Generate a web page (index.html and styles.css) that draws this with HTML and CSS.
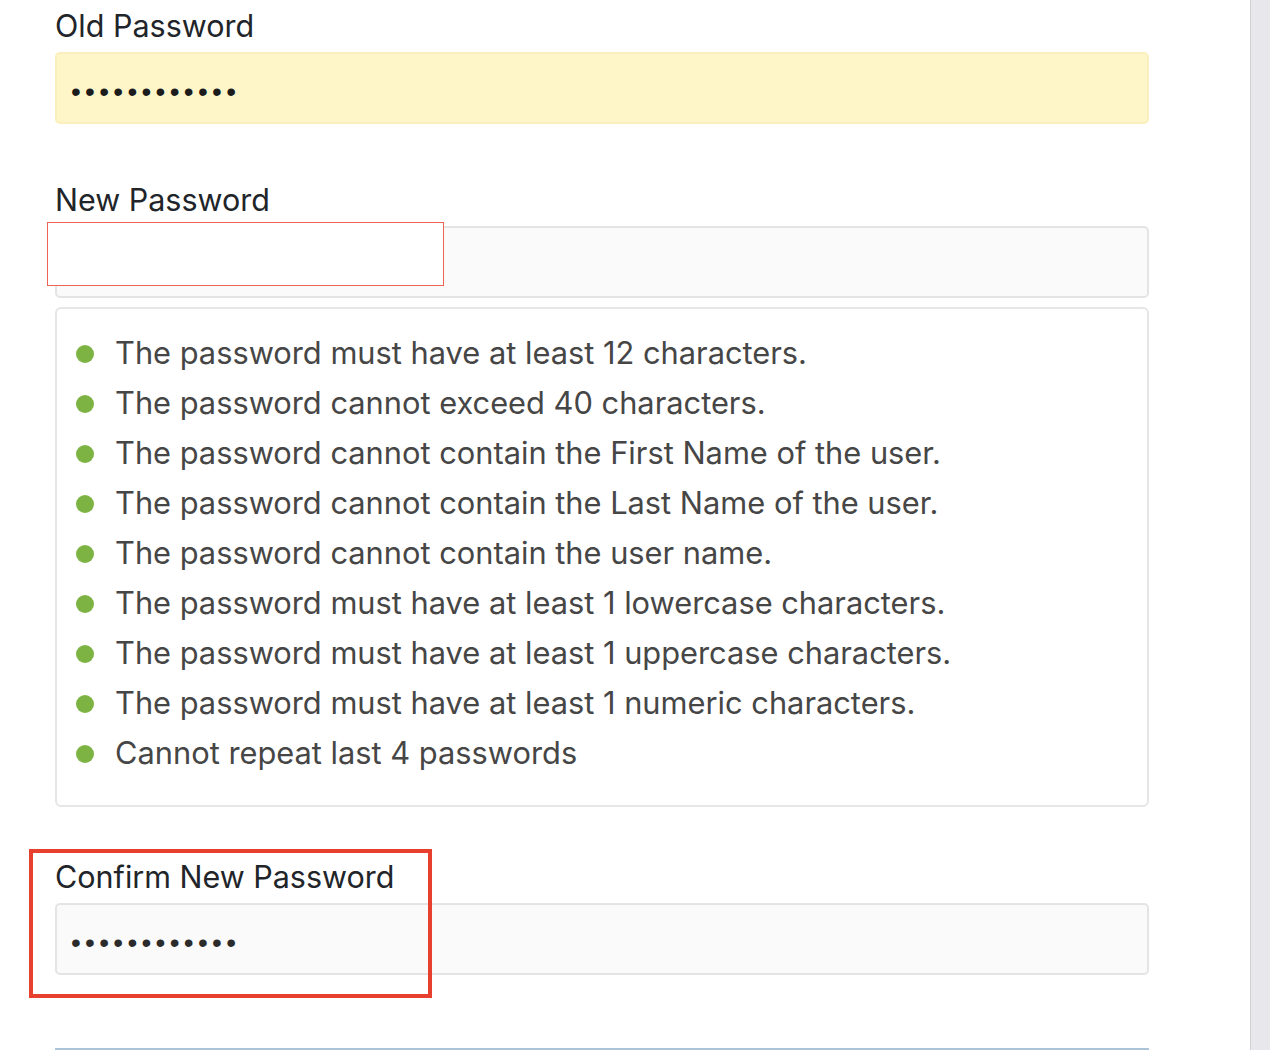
FILE: index.html
```html
<!DOCTYPE html>
<html lang="en">
<head>
<meta charset="utf-8">
<title>Change Password</title>
<link rel="stylesheet" href="styles.css">
</head>
<body>
<div class="page">
  <main class="content">
    <form class="form">
      <div class="group group-old">
        <label class="label" for="old">Old Password</label>
        <input class="input input-autofill" id="old" type="password" value="abcdefghijkl" readonly>
      </div>

      <div class="group group-new">
        <label class="label" for="new">New Password</label>
        <div class="field-wrap">
          <input class="input" id="new" type="password" value="" readonly>
          <div class="annot annot-thin"></div>
        </div>
        <div class="rules">
          <ul class="rule-list">
            <li class="rule">The password must have at least 12 characters.</li>
            <li class="rule">The password cannot exceed 40 characters.</li>
            <li class="rule">The password cannot contain the First Name of the user.</li>
            <li class="rule">The password cannot contain the Last Name of the user.</li>
            <li class="rule">The password cannot contain the user name.</li>
            <li class="rule">The password must have at least 1 lowercase characters.</li>
            <li class="rule">The password must have at least 1 uppercase characters.</li>
            <li class="rule">The password must have at least 1 numeric characters.</li>
            <li class="rule">Cannot repeat last 4 passwords</li>
          </ul>
        </div>
      </div>

      <div class="group group-confirm">
        <label class="label" for="confirm">Confirm New Password</label>
        <input class="input" id="confirm" type="password" value="abcdefghijkl" readonly>
        <div class="annot annot-thick"></div>
      </div>

      <div class="divider"></div>
    </form>
  </main>
  <div class="scrollbar"></div>
</div>
</body>
</html>
```

FILE: styles.css
```css
* {
  box-sizing: border-box;
}

html, body {
  margin: 0;
  padding: 0;
  height: 100%;
  background: #ffffff;
  overflow: hidden;
}

body {
  font-family: Inter, "Liberation Sans", Arial, sans-serif;
  color: #212529;
}

.page {
  display: flex;
  height: 1050px;
}

.content {
  flex: 1;
  padding: 6px 0 0 55px;
}

.form {
  width: 1094px;
}

.group {
  position: relative;
  display: flex;
  flex-direction: column;
}

.group-old {
  margin-bottom: 56px;
}

.group-new {
  margin-bottom: 50px;
}

.label {
  display: block;
  font-size: 30.5px;
  line-height: 40px;
  margin-bottom: 6px;
  color: #212529;
  font-weight: 400;
}

.field-wrap {
  position: relative;
}

.input {
  display: block;
  width: 100%;
  height: 72px;
  padding: 7px 14px 0;
  margin: 0;
  border: 2px solid #e4e4e4;
  border-radius: 5px;
  background: #fafafa;
  font-family: "Liberation Sans", Arial, sans-serif;
  font-size: 28px;
  letter-spacing: 4.3px;
  color: #2b2b2b;
  outline: none;
}

.input-autofill {
  background: #fef6c9;
  border-color: #fbefbd;
  color: #1c1c1c;
}

.rules {
  margin-top: 9px;
  border: 2px solid #e6e6e6;
  border-radius: 6px;
  background: #ffffff;
  padding: 18px 0 28px 19px;
}

.rule-list {
  list-style: none;
  margin: 0;
  padding: 0;
}

.rule {
  display: flex;
  align-items: center;
  height: 50px;
  font-size: 30.8px;
  color: #464646;
  white-space: nowrap;
}

.rule::before {
  content: "";
  flex: 0 0 18px;
  width: 18px;
  height: 18px;
  border-radius: 50%;
  background: #7db343;
  margin-right: 21px;
  margin-top: 3px;
}

.annot {
  position: absolute;
  pointer-events: none;
}

.annot-thin {
  top: -4px;
  left: -8px;
  width: 397px;
  height: 64px;
  border: 1.5px solid #ec6454;
  background: #ffffff;
}

.annot-thick {
  top: -8px;
  left: -26px;
  width: 403px;
  height: 149px;
  border: 4.5px solid #e8402e;
}

.divider {
  margin-top: 73px;
  height: 2px;
  background: #adc3d8;
}

.scrollbar {
  flex: 0 0 20px;
  width: 20px;
  background: #e8e8ec;
  border-left: 1.5px solid #d2d2d6;
}
```
